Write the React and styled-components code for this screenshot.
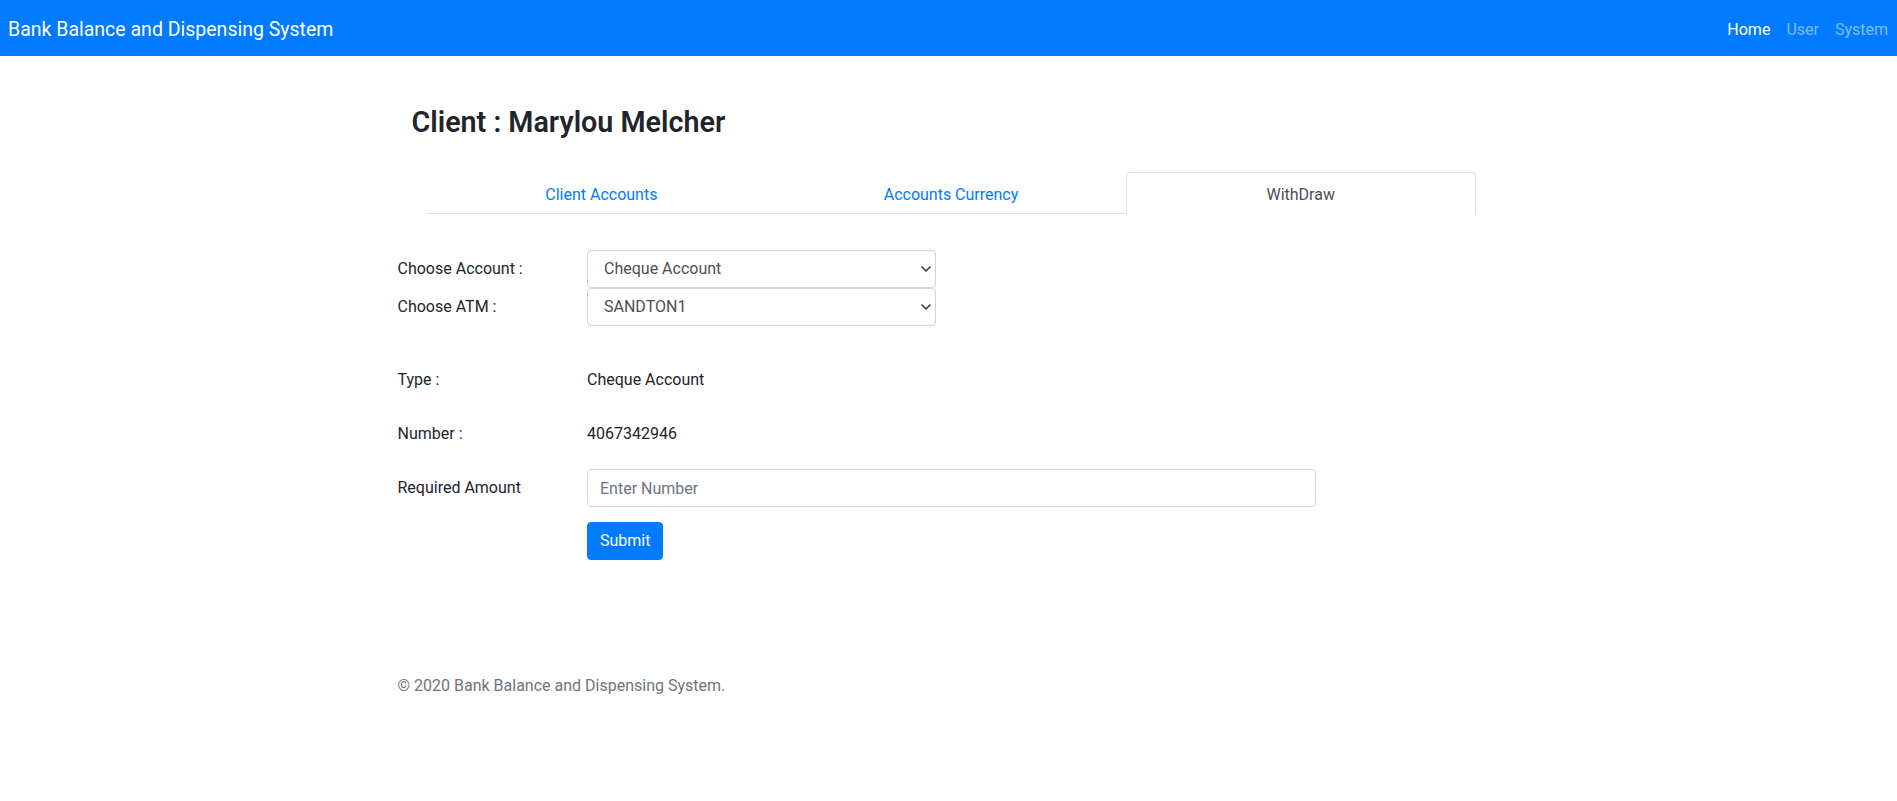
import React from 'react';
import styled, { createGlobalStyle } from 'styled-components';

const Global = createGlobalStyle`
  html, body { margin: 0; padding: 0; background: #fff; }
  body {
    font-family: Roboto, "Liberation Sans", Arial, sans-serif;
    font-size: 16px;
    line-height: 1.5;
    color: #212529;
  }
  *, *::before, *::after { box-sizing: border-box; }
`;

const Navbar = styled.nav`
  height: 56px;
  background: #007bff;
  display: flex;
  align-items: center;
  justify-content: space-between;
  padding: 4px 1px 0 8px;
`;

const Brand = styled.a`
  color: #fff;
  font-size: 19.5px;
  line-height: 30px;
  text-decoration: none;
`;

const NavList = styled.ul`
  display: flex;
  list-style: none;
  margin: 0;
  padding: 0;
`;

const NavLink = styled.a`
  display: block;
  padding: 8px;
  font-size: 16px;
  line-height: 24px;
  text-decoration: none;
  color: ${(p) => (p.$active ? '#fff' : 'rgba(255,255,255,0.5)')};
`;

const Main = styled.main`
  width: 1110px;
  margin: 0 auto;
  padding-top: 50px;
`;

const Title = styled.h3`
  margin: 0 0 0 18px;
  font-size: 28.7px;
  font-weight: 600;
  line-height: 33px;
  color: #212529;
`;

const Tabs = styled.ul`
  display: flex;
  list-style: none;
  margin: 33px 0 0 33px;
  padding: 0;
  width: 1049px;
  border-bottom: 1px solid #dee2e6;
`;

const Tab = styled.li`
  flex: 1 1 0;
  text-align: center;
  margin-bottom: -1px;
`;

const TabLink = styled.a`
  display: block;
  padding: 10px 16px 6px;
  line-height: 24px;
  text-decoration: none;
  border: 1px solid transparent;
  border-radius: 4px 4px 0 0;
  background: ${(p) => (p.$active ? '#fff' : 'transparent')};
  border-color: ${(p) => (p.$active ? '#dee2e6 #dee2e6 #fff' : 'transparent')};
  color: ${(p) => (p.$active ? '#495057' : '#007bff')};
`;

const Form = styled.form`
  margin-top: 36px;
  padding-left: 4px;
`;

const Row = styled.div`
  display: flex;
  align-items: center;
  margin-top: ${(p) => p.$mt || 0}px;
`;

const Label = styled.label`
  flex: none;
  width: 189.5px;
  line-height: 24px;
`;

const Value = styled.span`
  line-height: 24px;
`;

const SelectWrap = styled.div`
  position: relative;
  width: 349px;
`;

const Select = styled.select`
  appearance: none;
  -webkit-appearance: none;
  width: 100%;
  height: 38px;
  padding: 6px 28px 6px 16px;
  font: inherit;
  line-height: 24px;
  color: #495057;
  background: #fff;
  border: 1px solid #ced4da;
  border-radius: 4px;
  outline: none;
`;

const Chevron = styled.svg`
  position: absolute;
  right: 5px;
  top: 50%;
  transform: translateY(-50%);
  pointer-events: none;
`;

const Input = styled.input`
  width: 729px;
  height: 38px;
  padding: 6px 12px;
  font: inherit;
  line-height: 24px;
  color: #495057;
  background: #fff;
  border: 1px solid #ced4da;
  border-radius: 4px;
  outline: none;
  &::placeholder { color: #6c757d; opacity: 1; }
`;

const Spacer = styled.div`
  flex: none;
  width: 189.5px;
`;

const Button = styled.button`
  height: 38px;
  padding: 6px 12px;
  font: inherit;
  line-height: 24px;
  color: #fff;
  background: #007bff;
  border: 1px solid #007bff;
  border-radius: 4px;
  cursor: pointer;
`;

const Footer = styled.footer`
  margin-top: 114px;
  padding-left: 4px;
  color: #6c757d;
  line-height: 24px;
`;

const ChevronIcon = () => (
  <Chevron width="10" height="6" viewBox="0 0 10 6" fill="none">
    <path d="M1 1l4 4 4-4" stroke="#343a40" strokeWidth="1.6" strokeLinecap="round" strokeLinejoin="round" />
  </Chevron>
);

export default function App() {
  return (
    <>
      <Global />
      <Navbar>
        <Brand href="#">Bank Balance and Dispensing System</Brand>
        <NavList>
          <li><NavLink href="#" $active>Home</NavLink></li>
          <li><NavLink href="#">User</NavLink></li>
          <li><NavLink href="#">System</NavLink></li>
        </NavList>
      </Navbar>
      <Main>
        <Title>Client : Marylou Melcher</Title>
        <Tabs>
          <Tab><TabLink href="#">Client Accounts</TabLink></Tab>
          <Tab><TabLink href="#">Accounts Currency</TabLink></Tab>
          <Tab><TabLink href="#" $active>WithDraw</TabLink></Tab>
        </Tabs>
        <Form onSubmit={(e) => e.preventDefault()}>
          <Row>
            <Label>Choose Account :</Label>
            <SelectWrap>
              <Select defaultValue="cheque">
                <option value="cheque">Cheque Account</option>
                <option value="savings">Savings Account</option>
              </Select>
              <ChevronIcon />
            </SelectWrap>
          </Row>
          <Row>
            <Label>Choose ATM :</Label>
            <SelectWrap>
              <Select defaultValue="s1">
                <option value="s1">SANDTON1</option>
                <option value="s2">SANDTON2</option>
              </Select>
              <ChevronIcon />
            </SelectWrap>
          </Row>
          <Row $mt={42}>
            <Label>Type :</Label>
            <Value>Cheque Account</Value>
          </Row>
          <Row $mt={30}>
            <Label>Number :</Label>
            <Value>4067342946</Value>
          </Row>
          <Row $mt={23}>
            <Label>Required Amount</Label>
            <Input type="text" placeholder="Enter Number" />
          </Row>
          <Row $mt={15}>
            <Spacer />
            <Button type="submit">Submit</Button>
          </Row>
        </Form>
        <Footer>© 2020 Bank Balance and Dispensing System.</Footer>
      </Main>
    </>
  );
}
